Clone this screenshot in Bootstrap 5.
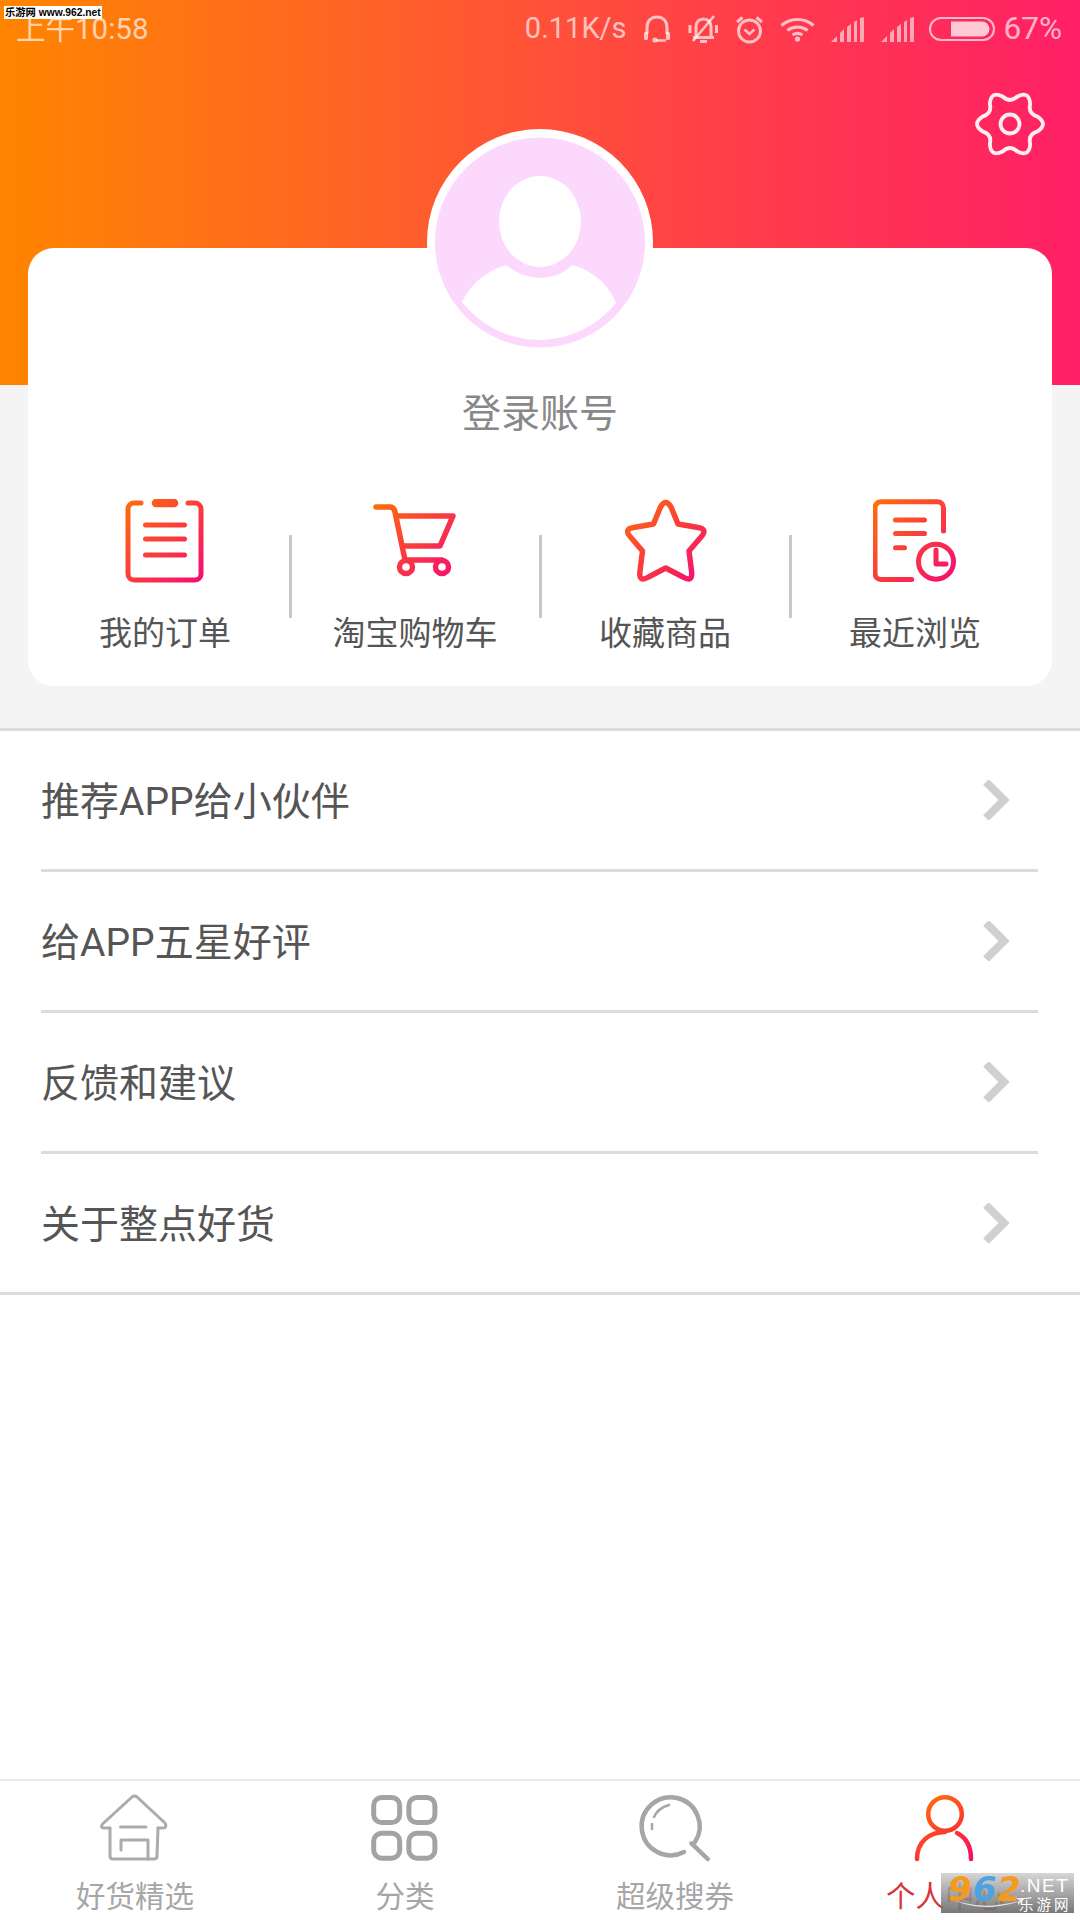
<!DOCTYPE html>
<html lang="zh">
<head>
    <meta charset="UTF-8">
    <meta name="viewport" content="width=device-width, initial-scale=1">
    <title>个人中心</title>
    <link href="https://cdn.jsdelivr.net/npm/bootstrap@5.3.0/dist/css/bootstrap.min.css" rel="stylesheet">
    <script src="https://cdn.jsdelivr.net/npm/bootstrap@5.3.0/dist/js/bootstrap.bundle.min.js"></script>

    <style>
        body {
            margin: 0;
            width: 1080px;
            height: 1920px;
            overflow: hidden;
            font-family: "Liberation Sans", "Noto Sans CJK SC", sans-serif;
        }

        .phone {
            position: relative;
            width: 1080px;
            height: 1920px;
        }

        /* Header */
        .hero {
            height: 385px;
            flex: none;
            background: linear-gradient(90deg, #ff8500 0%, #ff5a30 42%, #ff4444 62%, #ff1f66 100%);
        }

        .status-row {
            height: 56px;
            padding: 2px 18px 0 16px;
            color: rgba(255, 255, 255, .68);
            font-family: Roboto, "Noto Sans CJK SC", sans-serif;
            font-size: 29.5px;
        }

        .status-icons {
            gap: 16px;
        }

        .status-icons svg {
            display: block;
            flex: none;
        }

        .speed-text {
            margin-right: -1px;
            font-size: 29px;
        }

        .batt-icon {
            margin-left: -2px;
        }

        .batt-pct {
            margin-left: -7px;
            font-size: 31.5px;
        }

        .site-tag {
            position: absolute;
            left: 4px;
            top: 6px;
            width: 98px;
            height: 13px;
            background: #fff;
            color: #000;
            font-size: 10.3px;
            font-weight: 700;
            line-height: 13px;
            white-space: nowrap;
            overflow: hidden;
            padding-left: 1px;
        }

        .gear-row {
            padding: 30px 32px 0 0;
        }

        /* Profile card */
        .profile-band {
            background: #f4f4f4;
            padding: 0 28px 42px;
            flex: none;
        }

        .profile-card {
            display: flow-root;
            height: 438px;
            margin-top: -137px;
            background: #fff;
            border-radius: 26px;
            padding: 0 12px;
        }

        .avatar-pic {
            display: block;
            margin: -119px auto 0;
        }

        .login-name {
            margin-top: 34px;
            font-size: 39px;
            line-height: 50px;
            color: #888;
        }

        .shortcut-row {
            margin-top: 60px;
        }

        .shortcut-item {
            flex: 1 1 0;
        }

        .shortcut-item svg {
            display: block;
            margin: 0 auto;
        }

        .shortcut-label {
            margin-top: 29px;
            font-size: 33px;
            line-height: 44px;
            color: #555;
            white-space: nowrap;
        }

        .shortcut-sep {
            flex: none;
            width: 3px;
            height: 83px;
            margin: 36px -1.5px 0;
            background: #c8c8c8;
        }

        /* Menu list */
        .menu-list {
            border-top: 3px solid #dcdcdc;
            border-bottom: 3px solid #dcdcdc;
            border-radius: 0;
            flex: none;
        }

        .menu-list .list-group-item {
            height: 141px;
            margin: 0 42px 0 41px;
            padding: 0 28px 0 0;
            border: 0;
            border-bottom: 3px solid #dcdcdc;
            font-family: Roboto, "Noto Sans CJK SC", sans-serif;
            font-size: 39px;
            color: #555;
        }

        .menu-list .list-group-item span {
            padding-top: 4px;
        }

        .menu-list .list-group-item:last-child {
            height: 138px;
            border-bottom: 0;
        }

        /* Bottom tabs */
        .tab-bar {
            height: 141px;
            margin-top: auto;
            border-top: 2px solid #e8e8e8;
            padding-top: 11px;
        }

        .tab-cell {
            flex: 1 1 0;
        }

        .tab-cell svg {
            display: block;
            margin: 0 auto;
        }

        .tab-label {
            margin-top: 15px;
            font-size: 29.5px;
            line-height: 40px;
            color: #a6a6a6;
        }

        .tab-active {
            color: #d7373c;
        }

        /* Watermark over the last tab */
        .brand-stamp {
            position: absolute;
            left: 941px;
            top: 1873px;
            width: 133px;
            height: 40px;
            background: linear-gradient(180deg, rgba(205, 205, 205, .82), rgba(105, 105, 105, .9));
            overflow: hidden;
        }

        .stamp-num {
            position: absolute;
            left: 7px;
            top: -3px;
            font-size: 34px;
            line-height: 38px;
            font-weight: 700;
            font-style: italic;
            letter-spacing: 1px;
            color: #f39a1f;
            font-family: "DejaVu Sans", sans-serif;
        }

        .stamp-blue {
            color: #4da3e0;
        }

        .stamp-net {
            position: absolute;
            left: 79px;
            top: 3px;
            font-size: 19px;
            line-height: 20px;
            letter-spacing: 1.5px;
            color: #fff;
            white-space: nowrap;
        }

        .stamp-cn {
            position: absolute;
            left: 78px;
            top: 23px;
            font-size: 14.5px;
            line-height: 18px;
            letter-spacing: 3px;
            color: #fff;
            white-space: nowrap;
        }

        .stamp-swoosh {
            position: absolute;
            left: 5px;
            top: 21px;
        }
    </style>
</head>
<body>

<div class="phone d-flex flex-column bg-white">

    <!-- Orange header with status bar and settings -->
    <header class="hero">
        <div class="status-row d-flex align-items-center justify-content-between">
            <span>上午10:58</span>
            <div class="status-icons d-flex align-items-center">
                <span class="speed-text">0.11K/s</span>
                <svg width="30" height="28" viewBox="0 0 30 28" fill="none" stroke="#fff" stroke-opacity=".68" stroke-width="3">
                    <path d="M5 19V13C5 6 9 2 15 2S25 6 25 13V19"/>
                    <rect x="2" y="17" width="4" height="8" rx="1.5" fill="#fff" fill-opacity=".68" stroke="none"/>
                    <rect x="24" y="17" width="4" height="8" rx="1.5" fill="#fff" fill-opacity=".68" stroke="none"/>
                    <path d="M14 25.5H24" stroke-width="2.5"/>
                    <circle cx="13" cy="25" r="2.6" fill="#fff" fill-opacity=".68" stroke="none"/>
                </svg>
                <svg width="31" height="30" viewBox="0 0 31 30" fill="none" stroke="#fff" stroke-opacity=".68" stroke-width="3">
                    <path d="M8 22V13C8 8 11 5 15.5 5S23 8 23 13V22"/>
                    <path d="M5 23.5H26" />
                    <path d="M12 27.5H19"/>
                    <path d="M2 11V19M28.5 11V19"/>
                    <path d="M5 27L26 2" stroke-width="2.6"/>
                </svg>
                <svg width="29" height="29" viewBox="0 0 29 29" fill="none" stroke="#fff" stroke-opacity=".68" stroke-width="3">
                    <circle cx="14.5" cy="16" r="11"/>
                    <path d="M9.5 14.5L14.5 19L19.5 14.5" stroke-width="2.6"/>
                    <path d="M2 7L7.5 2.5M27 7L21.5 2.5"/>
                </svg>
                <svg width="35" height="25" viewBox="0 0 35 25" fill="none" stroke="#fff" stroke-opacity=".68" stroke-width="3.2">
                    <path d="M1.5 8.5C10.5 .5 24.5 .5 33.5 8.5"/>
                    <path d="M7.5 13.5C13 9 22 9 27.5 13.5"/>
                    <path d="M12.5 18C15.5 16 19.5 16 22.5 18"/>
                    <circle cx="17.5" cy="22" r="2.6" fill="#fff" fill-opacity=".68" stroke="none"/>
                </svg>
                <svg width="34" height="25" viewBox="0 0 34 25" fill="#fff" fill-opacity=".58">
                    <path d="M0 25L6 19V25ZM9 25V16L13 12V25ZM16 25V10L20 7V25ZM23 25V5L26 3V25ZM29 25V1L33 0V25Z"/>
                </svg>
                <svg width="34" height="25" viewBox="0 0 34 25" fill="#fff" fill-opacity=".58">
                    <path d="M0 25L6 19V25ZM9 25V16L13 12V25ZM16 25V10L20 7V25ZM23 25V5L26 3V25ZM29 25V1L33 0V25Z"/>
                </svg>
                <svg class="batt-icon" width="66" height="24" viewBox="0 0 66 24" fill="none">
                    <rect x="1" y="1" width="64" height="22" rx="11" stroke="#fff" stroke-opacity=".68" stroke-width="2"/>
                    <path d="M22 4.500H53a7.500 7.500 0 0 1 0 15H22Z" fill="#fff" fill-opacity=".75"/>
                </svg>
                <span class="batt-pct">67%</span>
            </div>
        </div>
        <div class="gear-row d-flex justify-content-end">
            <svg width="76" height="76" viewBox="-38 -38 76 76" fill="none" stroke="#fff" stroke-width="3.800" stroke-opacity=".92">
                <path d="M-7.400 -27.500Q0 -20.500 7.400 -27.500Q19.200 -33.350 20.200 -20.200Q17.750 -10.200 27.500 -7.400Q38.500 0 27.500 7.400Q17.750 10.200 20.200 20.200Q19.200 33.350 7.400 27.500Q0 20.500 -7.400 27.500Q-19.200 33.350 -20.200 20.200Q-17.750 10.200 -27.500 7.400Q-38.500 0 -27.500 -7.400Q-17.750 -10.200 -20.200 -20.200Q-19.200 -33.350 -7.400 -27.500Z"/>
                <circle cx="0" cy="0" r="9.500"/>
            </svg>
        </div>
    </header>

    <!-- Avatar, login and shortcuts -->
    <section class="profile-band">
        <div class="profile-card">
            <svg class="avatar-pic" width="226" height="226" viewBox="0 0 226 226">
                <circle cx="113" cy="113" r="113" fill="#fff"/>
                <circle cx="113" cy="113.500" r="105" fill="#fcd8fd"/>
                <ellipse cx="113" cy="92.500" rx="41" ry="45.500" fill="#fff"/>
                <path d="M79 136Q95 149 113 149T146 136C165 142 182 155 189 174A98 98 0 0 1 35 173C43 155 60 142 79 136Z" fill="#fff"/>
            </svg>
            <div class="login-name text-center">登录账号</div>
            <div class="shortcut-row d-flex">
                <div class="shortcut-item text-center">
                    <svg width="84" height="84" viewBox="0 0 84 84" fill="none" stroke="url(#warmA)" stroke-width="5" stroke-linecap="round">
                        <defs>
                            <linearGradient id="warmA" gradientUnits="userSpaceOnUse" x1="0" y1="0" x2="84" y2="84">
                                <stop offset="0" stop-color="#ff7008"/>
                                <stop offset=".5" stop-color="#fb3c3c"/>
                                <stop offset="1" stop-color="#f4097a"/>
                            </linearGradient>
                        </defs>
                        <path d="M18 4H11A6 6 0 0 0 5 10V75A6 6 0 0 0 11 81H72A6 6 0 0 0 78 75V10A6 6 0 0 0 72 4H65"/>
                        <path d="M33 4H51" stroke-width="8.500"/>
                        <path d="M22.500 26H61.500M22.500 40H61.500M22.500 56H61.500" stroke-width="5"/>
                    </svg>
                    <div class="shortcut-label">我的订单</div>
                </div>
                <div class="shortcut-sep"></div>
                <div class="shortcut-item text-center">
                    <svg width="84" height="84" viewBox="0 0 84 84" fill="none" stroke="url(#warmA)" stroke-width="5.500" stroke-linecap="round" stroke-linejoin="round">
                        <path d="M3 8H17Q21 8 22 13L32 61H69"/>
                        <path d="M24 17H80L67 47H30"/>
                        <circle cx="33" cy="68" r="6.500"/>
                        <circle cx="69" cy="68" r="6.500"/>
                    </svg>
                    <div class="shortcut-label">淘宝购物车</div>
                </div>
                <div class="shortcut-sep"></div>
                <div class="shortcut-item text-center">
                    <svg width="84" height="84" viewBox="0 0 84 84" fill="none" stroke="url(#warmA)" stroke-width="5.500" stroke-linejoin="round">
                        <path d="M37.500 8Q42.700 -1 48 8L55 25L75 28.500Q85 30 78 38L66 52L68.500 72Q70 84 60 78L42.700 69L25.500 78Q15.500 84 17 72L19.500 52L7.500 38Q.5 30 10.500 28.500L30.500 25Z"/>
                    </svg>
                    <div class="shortcut-label">收藏商品</div>
                </div>
                <div class="shortcut-sep"></div>
                <div class="shortcut-item text-center">
                    <svg width="84" height="84" viewBox="0 0 84 84" fill="none" stroke="url(#warmA)" stroke-width="5" stroke-linecap="round" stroke-linejoin="round">
                        <path d="M38.700 80.500H8A6 6 0 0 1 2 74.500V8.700A6 6 0 0 1 8 2.700H64.500A6 6 0 0 1 70.500 8.700V32"/>
                        <path d="M22.500 21H51.500M22.500 34.500H51.500M22.500 48.700H31.500" stroke-width="5"/>
                        <circle cx="63" cy="62.700" r="17.500" stroke-width="5"/>
                        <path d="M63 51V65H73" stroke-width="5"/>
                    </svg>
                    <div class="shortcut-label">最近浏览</div>
                </div>
            </div>
        </div>
    </section>

    <!-- Menu -->
    <div class="menu-list list-group list-group-flush">
        <div class="list-group-item d-flex align-items-center justify-content-between">
            <span>推荐APP给小伙伴</span>
            <svg width="28" height="40" viewBox="0 0 28 40" fill="none" stroke="#d0d0d0" stroke-width="8"><path d="M4 2L22 20L4 38"/></svg>
        </div>
        <div class="list-group-item d-flex align-items-center justify-content-between">
            <span>给APP五星好评</span>
            <svg width="28" height="40" viewBox="0 0 28 40" fill="none" stroke="#d0d0d0" stroke-width="8"><path d="M4 2L22 20L4 38"/></svg>
        </div>
        <div class="list-group-item d-flex align-items-center justify-content-between">
            <span>反馈和建议</span>
            <svg width="28" height="40" viewBox="0 0 28 40" fill="none" stroke="#d0d0d0" stroke-width="8"><path d="M4 2L22 20L4 38"/></svg>
        </div>
        <div class="list-group-item d-flex align-items-center justify-content-between">
            <span>关于整点好货</span>
            <svg width="28" height="40" viewBox="0 0 28 40" fill="none" stroke="#d0d0d0" stroke-width="8"><path d="M4 2L22 20L4 38"/></svg>
        </div>
    </div>

    <!-- Bottom navigation -->
    <nav class="tab-bar d-flex">
        <div class="tab-cell text-center">
            <svg width="80" height="70" viewBox="0 0 80 70" fill="none" stroke="#ababab" stroke-width="3" stroke-linejoin="round" stroke-linecap="round">
                <path d="M15 36H9Q5 36 7.500 32L37 5Q39.500 3 42 5L70 31Q72.500 36 68 36H63"/>
                <path d="M15 36V64Q15 67 18 67H59Q62 67 62 64L63 36"/>
                <path d="M25.500 35H51M26 58V48H53V67"/>
            </svg>
            <div class="tab-label">好货精选</div>
        </div>
        <div class="tab-cell text-center">
            <svg width="80" height="70" viewBox="0 0 80 70" fill="none" stroke="#a3a3a3" stroke-width="5">
                <rect x="8.700" y="5.500" width="26" height="25" rx="8"/>
                <rect x="43.900" y="5.500" width="26" height="25" rx="8"/>
                <rect x="8.700" y="41.200" width="26" height="25" rx="8"/>
                <rect x="43.900" y="41.200" width="26" height="25" rx="8"/>
            </svg>
            <div class="tab-label">分类</div>
        </div>
        <div class="tab-cell text-center">
            <svg width="80" height="70" viewBox="0 0 80 70" fill="none" stroke="#a6a6a6" stroke-width="4.500" stroke-linecap="round">
                <path d="M49 60A29 29 0 1 1 60 50"/>
                <path d="M56.500 51.300L72.700 67"/>
                <path d="M17 37V32M19 25Q23 16 34 13" stroke-width="2.500"/>
            </svg>
            <div class="tab-label">超级搜券</div>
        </div>
        <div class="tab-cell text-center">
            <svg width="80" height="70" viewBox="0 0 80 70" fill="none" stroke="url(#warmB)" stroke-width="4.500" stroke-linecap="round">
                <defs>
                    <linearGradient id="warmB" gradientUnits="userSpaceOnUse" x1="20" y1="3" x2="66" y2="68">
                        <stop offset="0" stop-color="#ff7208"/>
                        <stop offset=".55" stop-color="#fb3a30"/>
                        <stop offset="1" stop-color="#f00f68"/>
                    </linearGradient>
                </defs>
                <circle cx="40" cy="22" r="16.800"/>
                <path d="M12 67C12 50 24 40 40 40"/>
                <path d="M52 41C62 46 66 55 66 67"/>
            </svg>
            <div class="tab-label tab-active">个人中心</div>
        </div>
    </nav>

    <!-- Watermarks lying over the screenshot -->
    <div class="site-tag">乐游网 www.962.net</div>
    <div class="brand-stamp">
        <svg class="stamp-swoosh" width="80" height="18" viewBox="0 0 80 18" fill="none">
            <path d="M2 3Q30 18 74 7L70 4L79 4L72 11L72 8Q30 20 2 3Z" fill="#e8e8e8"/>
        </svg>
        <span class="stamp-num">9<span class="stamp-blue">6</span>2</span>
        <span class="stamp-net">.NET</span>
        <span class="stamp-cn">乐游网</span>
    </div>
</div>

</body>
</html>
